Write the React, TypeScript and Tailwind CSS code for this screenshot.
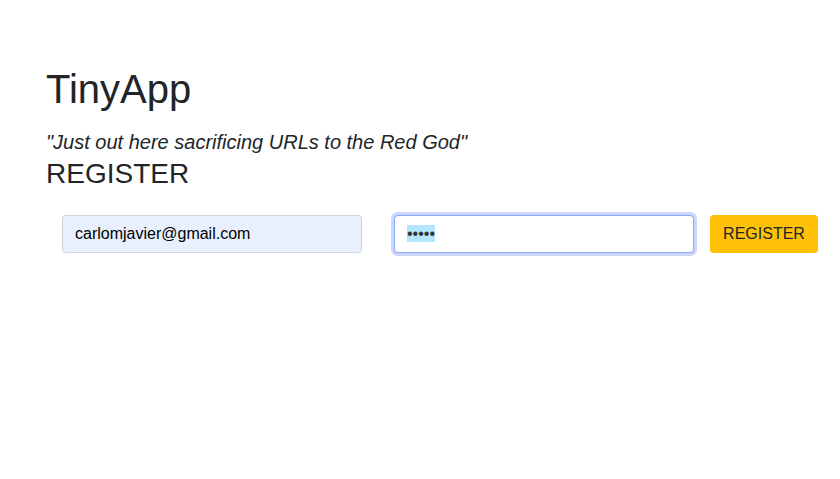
export default function App() {
  return (
    <div className="min-h-[479px] bg-white text-[#212529] font-['Liberation_Sans',Arial,sans-serif]">
      <div className="px-[46px] pt-[65px]">
        <h1 className="text-[40px] leading-[1.2] mb-[17px]">TinyApp</h1>
        <p className="text-[20px] leading-[1.2] italic">"Just out here sacrificing URLs to the Red God"</p>
        <h2 className="text-[28px] leading-[1.2] mt-[3px]">REGISTER</h2>
        <form className="flex items-center mt-[24px]" onSubmit={(e) => e.preventDefault()}>
          <div className="mx-4 shrink-0">
            <input
              type="email"
              defaultValue="carlomjavier@gmail.com"
              className="w-[300px] h-[38px] px-3 text-base rounded border border-[#ced4da] bg-[#e8f0fe] text-black outline-none"
            />
          </div>
          <div className="mx-4 shrink-0">
            <div className="w-[300px] h-[38px] px-3 flex items-center rounded border border-[#86aaf6] bg-white shadow-[0_0_0_3px_#cad4fd]">
              <span className="bg-[#b3e5fc] text-[#333] text-[16px] leading-[17px] h-[17px] flex items-center">
                •••••
              </span>
            </div>
          </div>
          <button
            type="submit"
            className="shrink-0 w-[108px] h-[38px] rounded bg-[#ffc107] text-[#212529] text-base"
          >
            REGISTER
          </button>
        </form>
      </div>
    </div>
  );
}
